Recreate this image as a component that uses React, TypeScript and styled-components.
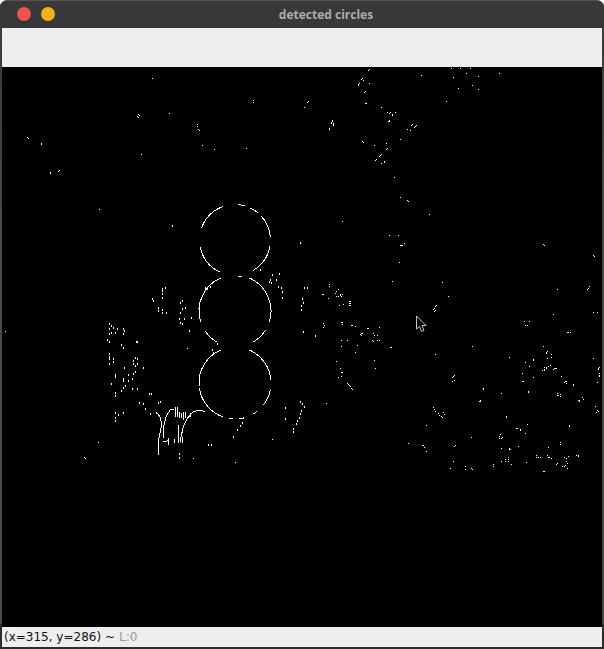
import React from "react";
import styled, { createGlobalStyle } from "styled-components";

const Global = createGlobalStyle`
  html, body { margin: 0; padding: 0; background: #fff; }
`;

const Window = styled.div`
  width: 604px;
  height: 649px;
  box-sizing: border-box;
  display: flex;
  flex-direction: column;
  background: #3a3a3a;
  border-radius: 7px 7px 0 0;
  overflow: hidden;
  border-top: 1px solid #555;
`;

const TitleBar = styled.div`
  height: 27px;
  flex: none;
  display: flex;
  align-items: center;
  justify-content: center;
  position: relative;
  background: #383838;
`;

const Lights = styled.div`
  position: absolute;
  left: 17px;
  top: 6px;
  display: flex;
  gap: 10px;
`;

const Light = styled.span<{ $color: string }>`
  width: 14px;
  height: 14px;
  border-radius: 50%;
  background: ${(p) => p.$color};
`;

const Title = styled.span`
  font: bold 12px "Open Sans", sans-serif;
  color: #acacac;
  margin-left: 48px;
`;

const Body = styled.div`
  flex: 1;
  display: flex;
  flex-direction: column;
  padding: 0 2px 2px;
  background: linear-gradient(#3a3a3a, #4a4a4a 30%, #4a4a4a 96%, #2c2c2c 96%);
`;

const Toolbar = styled.div`
  height: 39px;
  flex: none;
  background: #eeeeee;
`;

const Canvas = styled.svg`
  display: block;
  width: 600px;
  height: 560px;
  flex: none;
  background: #000;
`;

const StatusBar = styled.div`
  height: 20px;
  flex: none;
  display: flex;
  align-items: center;
  gap: 4px;
  padding-left: 2px;
  background: #eeeeee;
  font: 12px "DejaVu Sans", sans-serif;
  color: #111;
`;

const Dim = styled.span`
  color: #999;
`;

type Block = { ox: number; oy: number; tall: number; list: string };

const blocks: Block[] = [
  { ox: 0, oy: 67, tall: 1, list: "457,34 760,100 760,105 415,142 418,145 412,148 415,151 508,139 592,172 592,177 595,187 598,190 82,211 85,214 124,229 124,232 607,235 643,247 739,244 424,262 151,316 151,319 178,310 175,313" },
  { ox: 300, oy: 60, tall: 1, list: "208,28 205,31 454,25 481,25 511,25 187,55 184,58 190,61 364,46 460,52 499,40 535,49 598,40 178,70 175,73 175,76 208,70 517,76 475,85 535,88 196,94 193,97 25,124 22,127 13,142 194,130 197,130 439,124 244,142 262,157 271,157 268,160 286,157 277,163 277,166 97,181 97,184 94,187 94,190 100,190 100,193 100,196 268,181 265,184 268,184 337,193 334,196 349,196 346,199 343,202 322,208 331,211 88,205 88,208 187,244 190,247 301,238 259,250 223,256 262,265 259,268 244,283 241,286 238,289 229,298 226,301 253,304 253,307 244,310 283,352" },
  { ox: 320, oy: 180, tall: 1, list: "241,52 262,61 265,64 328,103 67,124 208,166 235,166 253,190 241,196 247,196 244,196 668,193 671,196 238,247 820,226 823,229 217,304 367,307 807,319 804,325 801,328 712,328 28,313 28,318 54,328 48,334 45,340 48,349 54,349 60,343 66,343 60,346 63,349 6,343 10,343 385,349 25,355 70,373 58,376 88,364 91,364 88,370 91,370 88,376 91,376 348,376 345,379 342,385 339,388 345,391 342,394 700,403 820,397 832,397 613,424 628,424 616,436 622,436 10,430 13,436 10,442 64,427 67,427 67,433 94,436 97,436 106,439 142,445 145,445 178,442 126,460 123,460 120,463 123,466 160,460 163,466 172,466 742,457 751,457 745,457" },
  { ox: 290, oy: 280, tall: 1, list: "154,181 172,181 247,181 250,184 262,181 268,181 154,199 202,196 196,217 301,202 304,202 139,244 253,241 151,265 256,265 154,277 157,277 154,289 145,292 172,310 175,313 178,316 181,319 184,325 187,328 109,370" },
  { ox: 404, oy: 340, tall: 1, list: "205,19 418,19 94,43 430,34 427,37 427,40 442,43 442,52 430,55 316,52 568,55 388,58 388,61 364,67 376,79 439,76 433,79 427,82 427,85 421,82 421,88 421,91 415,91 451,85 454,85 457,85 448,88 586,82 583,85 583,88 586,100 586,106 586,109 355,100 151,106 148,109 145,112 388,112 472,109 151,121 145,124 355,124 358,124 484,124 481,127 487,124 487,130 508,133 508,136 580,127 238,145 238,148 373,154 373,157 292,160 460,160 460,166 463,166 469,163 469,169 535,172 538,178 526,181 523,181 526,184 229,181 226,184 229,184 574,199 580,211 583,214 577,217 88,202 91,208 94,214 103,220 106,226 112,229 115,232 118,217 121,223 307,229 307,232 67,256 370,253 496,256 496,259 337,265 340,265 349,268 349,271 364,280 289,283 286,289 286,295 292,295 295,292 202,292 13,310 58,316 61,322 67,334 154,316 151,319 469,307 469,313 292,325 316,325 316,328 319,328 343,319 433,322 397,346 397,350 403,352 409,352 430,346 433,350 436,352 442,355 481,352 493,349 487,355 517,346 523,346 523,349 304,358 304,364 313,352 313,358 313,364 292,364 148,364 322,373 367,367 487,364 490,370 460,370 457,373 268,373 268,379 475,379 484,376 481,379 490,385 184,379 184,388 139,385 202,385 205,388 418,394 421,394" },
  { ox: 100, oy: 190, tall: 2, list: "217,106 600,157 480,238 537,250 516,253 510,268 507,274 513,277 528,268 534,289 543,292 546,304 546,322 195,290 186,293 186,300 186,310 186,322 155,325 158,330 240,335 245,330 255,350 245,355 175,352 175,360 186,358 186,365 198,367 240,365 237,385 240,395 245,400 252,385 272,382 268,420 605,325 610,335 604,345 604,358 602,345 612,290 622,290 610,424 645,435 315,292 322,295 330,288 28,400 34,406 40,412 28,415 34,425 28,428 44,425 50,415 68,415 71,421 68,430 22,448 28,454 64,463 70,470 108,454 112,454 28,490 28,498 28,505 28,520 40,505 40,512 100,510 106,502 112,505 100,520 112,520 106,526 72,530 128,532 106,543 44,553 44,558 70,563 70,570 85,553 85,570 95,565 100,550 74,585 70,590 64,600 32,580 44,605 44,615 95,595 110,595 148,610 152,610 118,635 128,640 134,655 150,668 335,478 340,485 352,460 175,635 180,633 45,665 45,680 45,690 55,672 68,665 168,665 600,632 605,640 612,648 555,652 555,685 604,660 600,670 596,680 592,690 588,700 580,715 580,722 425,695 420,705 412,718 400,737 430,682 325,762 332,762 238,788 238,800" },
  { ox: 100, oy: 190, tall: 1, list: "415,258 418,258 421,258 424,258 260,475 517,748 278,805 405,817" },
];

const loose: [number, number][] = [
  [5, 331],
  [84, 457],
  [85, 458],
  [98, 442],
  [99, 209],
  [422, 445],
];

const specks = [
  ...blocks.flatMap(({ ox, oy, tall, list }) =>
    list.split(" ").map((s) => {
      const [x, y] = s.split(",").map(Number);
      return { x: Math.round(x / 3) + ox, y: Math.round(y / 3) + oy, h: tall };
    })
  ),
  ...loose.map(([x, y]) => ({ x, y, h: 1 })),
];

const arc = (cx: number, cy: number, r: number, a: number, b: number) => {
  const rad = (d: number) => (d * Math.PI) / 180;
  const large = Math.abs(b - a) > 180 ? 1 : 0;
  return `M${cx + r * Math.cos(rad(a))} ${cy + r * Math.sin(rad(a))}A${r} ${r} 0 ${large} 1 ${cx + r * Math.cos(rad(b))} ${cy + r * Math.sin(rad(b))}`;
};

const ringArcs = [
  arc(235, 240, 35.5, -161, -109),
  arc(235, 240, 35.5, 116, 169),
  arc(235, 240, 35.5, 10, 60),
  arc(235, 240, 35.5, -42, -5),
  arc(235, 240, 35.5, -64, -50),
  arc(235, 240, 35.5, -85, -74),
  arc(235, 311, 36, 163, 246),
  arc(235, 311, 36, 121, 147),
  arc(235, 311, 36, 32, 60),
  arc(235, 311, 36, -66, 18),
  arc(235, 383, 36, 175, 248),
  arc(235, 383, 36, 109, 172),
  arc(235, 383, 36, 94, 100),
  arc(235, 383, 36, 78, 84),
  arc(235, 383, 36, 52, 60),
  arc(235, 383, 36, 11, 38),
  arc(235, 383, 36, -68, -5),
];

const toPx = (s: string) =>
  s
    .split(" ")
    .map((p) => {
      const [x, y] = p.split(",").map(Number);
      return `${(x / 3 + 100).toFixed(1)},${(y / 3 + 190).toFixed(1)}`;
    })
    .join(" ");

const trunks = [
  "175,795 176,750 182,720 185,700 180,680 168,665",
  "190,745 192,705 198,680 210,660 222,658",
  "240,755 250,710 262,685 280,665 300,660 315,665",
  "226,650 226,680",
  "232,650 232,680",
  "238,665 238,685",
  "244,668 244,685",
  "250,665 250,690",
  "256,665 256,685",
  "235,705 235,760",
  "224,748 224,760",
  "248,740 248,760",
  "205,745 205,765",
  "272,668 272,680",
  "190,755 205,752",
].map(toPx);

export default function App() {
  return (
    <>
      <Global />
      <Window>
        <TitleBar>
          <Lights>
            <Light $color="#f0524f" />
            <Light $color="#f5b01a" />
          </Lights>
          <Title>detected circles</Title>
        </TitleBar>
        <Body>
          <Toolbar />
          <Canvas viewBox="2 67 600 560" shapeRendering="crispEdges">
            {specks.map(({ x, y, h }, i) => (
              <rect key={i} x={x} y={y} width={1} height={h} fill="#fff" />
            ))}
            {ringArcs.map((d, i) => (
              <path key={i} d={d} fill="none" stroke="#fff" strokeWidth={1} />
            ))}
            {trunks.map((p, i) => (
              <polyline key={i} points={p} fill="none" stroke="#fff" strokeWidth={1} />
            ))}
            <path
              d="M416.5 316V329L419.5 326.5L421.5 331.5L424 330.5L422 325.5H426Z"
              fill="#000"
              stroke="#c8c8c8"
              strokeWidth={1}
              shapeRendering="auto"
            />
          </Canvas>
          <StatusBar>
            <span>(x=315, y=286) ~</span>
            <Dim>L:0</Dim>
          </StatusBar>
        </Body>
      </Window>
    </>
  );
}
